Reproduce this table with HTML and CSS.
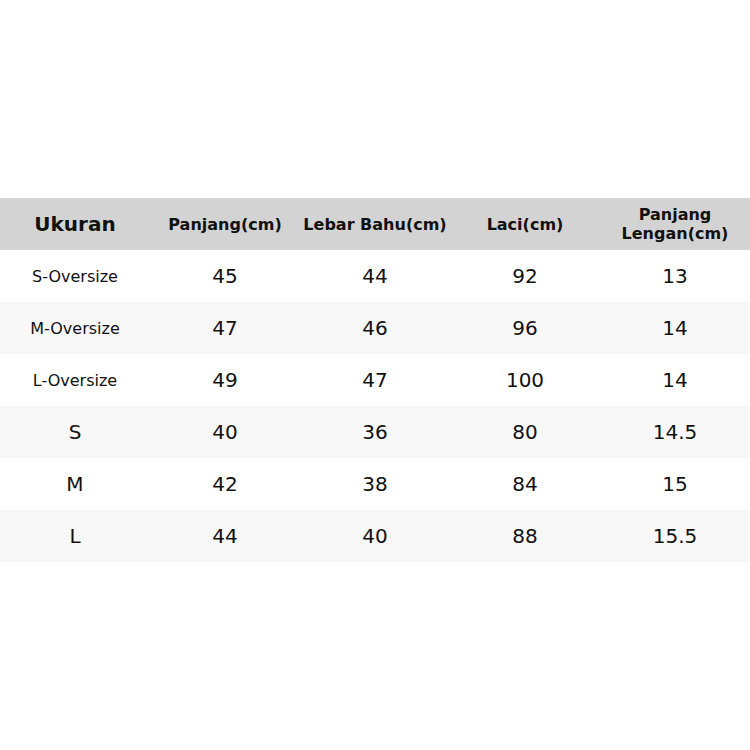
FILE: index.html
```html
<!DOCTYPE html>
<html>
<head>
<meta charset="utf-8">
<link rel="stylesheet" href="styles.css">
</head>
<body>
<main class="page">
  <table class="size-table">
    <thead>
      <tr>
        <th class="first">Ukuran</th>
        <th>Panjang(cm)</th>
        <th>Lebar Bahu(cm)</th>
        <th>Laci(cm)</th>
        <th>Panjang<br>Lengan(cm)</th>
      </tr>
    </thead>
    <tbody>
      <tr><td class="label">S-Oversize</td><td>45</td><td>44</td><td>92</td><td>13</td></tr>
      <tr><td class="label">M-Oversize</td><td>47</td><td>46</td><td>96</td><td>14</td></tr>
      <tr><td class="label">L-Oversize</td><td>49</td><td>47</td><td>100</td><td>14</td></tr>
      <tr><td>S</td><td>40</td><td>36</td><td>80</td><td>14.5</td></tr>
      <tr><td>M</td><td>42</td><td>38</td><td>84</td><td>15</td></tr>
      <tr><td>L</td><td>44</td><td>40</td><td>88</td><td>15.5</td></tr>
    </tbody>
  </table>
</main>
</body>
</html>
```
FILE: styles.css
```css
html, body {
  margin: 0;
  padding: 0;
  background: #fff;
}
.page {
  width: 750px;
  height: 750px;
  padding-top: 198px;
  box-sizing: border-box;
}
.size-table {
  width: 750px;
  border-collapse: collapse;
  table-layout: fixed;
  font-family: "DejaVu Sans", sans-serif;
  color: #111;
}
.size-table th,
.size-table td {
  width: 150px;
  height: 52px;
  padding: 0;
  text-align: center;
  vertical-align: middle;
}
.size-table thead tr {
  background: #d3d3d3;
}
.size-table th {
  font-size: 16px;
  font-weight: bold;
  line-height: 19px;
}
.size-table th.first {
  font-size: 20px;
}
.size-table td {
  font-size: 20px;
}
.size-table td.label {
  font-size: 16px;
}
.size-table tbody tr:nth-child(even) {
  background: #f8f8f8;
}
```
